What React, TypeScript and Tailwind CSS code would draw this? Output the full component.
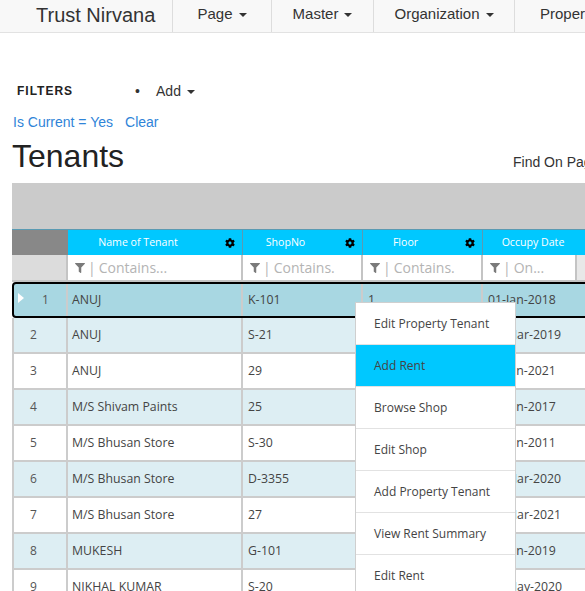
import { FaCog, FaFilter } from 'react-icons/fa';

const rows = [
  { no: 1, name: 'ANUJ', shop: 'K-101', floor: '1', date: '01-Jan-2018' },
  { no: 2, name: 'ANUJ', shop: 'S-21', floor: '1', date: '01-Mar-2019' },
  { no: 3, name: 'ANUJ', shop: '29', floor: '2', date: '01-Jan-2021' },
  { no: 4, name: 'M/S Shivam Paints', shop: '25', floor: 'G', date: '01-Jan-2017' },
  { no: 5, name: 'M/S Bhusan Store', shop: 'S-30', floor: '1', date: '01-Jan-2011' },
  { no: 6, name: 'M/S Bhusan Store', shop: 'D-3355', floor: '3', date: '01-Mar-2020' },
  { no: 7, name: 'M/S Bhusan Store', shop: '27', floor: '2', date: '01-Mar-2021' },
  { no: 8, name: 'MUKESH', shop: 'G-101', floor: 'G', date: '01-Jan-2019' },
  { no: 9, name: 'NIKHAL KUMAR', shop: 'S-20', floor: '1', date: '01-May-2020' },
];

const menu = [
  'Edit Property Tenant',
  'Add Rent',
  'Browse Shop',
  'Edit Shop',
  'Add Property Tenant',
  'View Rent Summary',
  'Edit Rent',
];

function Caret() {
  return (
    <span className="inline-block ml-[6px] w-0 h-0 border-t-[4px] border-l-[4px] border-r-[4px] border-t-[#333] border-l-transparent border-r-transparent align-middle" />
  );
}

function NavItem({ label, width }: { label: string; width: string }) {
  return (
    <div className={`${width} h-full flex items-center justify-center border-l border-[#ddd] text-[15px] text-[#333] shrink-0 pb-[3px]`}>
      {label}
      <Caret />
    </div>
  );
}

function HeadCell({ label, width, gear = true }: { label: string; width: string; gear?: boolean }) {
  return (
    <div className={`${width} shrink-0 h-full bg-[#00c8ff] border-r border-[#5a9ab2] flex items-center relative`}>
      <span className={`flex-1 text-center ${gear ? 'pr-[34px]' : 'pr-[0px]'} text-white text-[10.6px]`}>{label}</span>
      {gear && (
        <span className="absolute right-[7px] top-[8px] text-black">
          <FaCog size={10} />
        </span>
      )}
    </div>
  );
}

function FilterCell({ hint, width }: { hint: string; width: string }) {
  return (
    <div className={`${width} shrink-0 h-full bg-white border-r-2 border-[#c4c4c4] flex items-center pl-[7px] gap-[3px] text-[#b4b4b4] text-[14px] overflow-hidden whitespace-nowrap`}>
      <span className="text-[#7a7a7a] mt-[1px]">
        <FaFilter size={10} />
      </span>
      <span>|</span>
      <span>{hint}</span>
    </div>
  );
}

export default function App() {
  return (
    <div className="w-[585px] h-[591px] overflow-hidden bg-white relative font-['Liberation_Sans',Arial,sans-serif]">
      {/* navbar */}
      <div className="h-[33px] bg-[#f8f8f8] border-b border-[#e2e2e2] flex items-stretch whitespace-nowrap">
        <div className="w-[172px] shrink-0 pl-[36px] pb-[3px] flex items-center text-[20px] text-[#333]">Trust Nirvana</div>
        <NavItem label="Page" width="w-[99px]" />
        <NavItem label="Master" width="w-[102px]" />
        <NavItem label="Organization" width="w-[141px]" />
        <div className="w-[120px] h-full flex items-center border-l border-[#ddd] pl-[25px] pb-[3px] text-[15px] text-[#333] shrink-0">
          Property
        </div>
      </div>

      {/* filters */}
      <div className="mt-[48px] h-[20px] flex items-center whitespace-nowrap">
        <span className="ml-[17px] text-[12px] font-bold tracking-[1px] text-[#222]">FILTERS</span>
        <span className="ml-[62px] text-[14px] text-[#333]">•</span>
        <span className="ml-[16px] text-[14px] text-[#333]">
          Add
          <Caret />
        </span>
      </div>
      <div className="mt-[11px] h-[20px] flex items-center text-[14px] text-[#2f84d8] pl-[13px] gap-[12px]">
        <span>Is Current = Yes</span>
        <span>Clear</span>
      </div>
      <div className="mt-[6px] h-[36px] flex items-end whitespace-nowrap">
        <h1 className="w-[513px] shrink-0 pl-[12px] text-[32px] leading-[36px] text-[#222]">Tenants</h1>
        <span className="text-[14px] text-[#333] mb-[1px]">Find On Page</span>
      </div>

      {/* grid */}
      <div className="mt-[9px] ml-[12px] w-[640px] font-['Open_Sans','Noto_Sans',sans-serif]">
        <div className="h-[46px] bg-[#cbcbcb]" />
        <div className="h-[26px] flex border-t border-[#5a9ab2]">
          <div className="w-[56px] shrink-0 h-full bg-[#888]" />
          <HeadCell label="Name of Tenant" width="w-[175px]" />
          <HeadCell label="ShopNo" width="w-[120px]" />
          <HeadCell label="Floor" width="w-[120px]" />
          <div className="w-[94px] shrink-0 h-full bg-[#00c8ff] flex items-center justify-center text-white text-[10.6px] pl-[6px]">
            Occupy Date
          </div>
          <div className="flex-1 h-full bg-[#00c8ff]" />
        </div>
        <div className="h-[27px] flex border-b-2 border-[#c4c4c4]">
          <div className="w-[56px] shrink-0 h-full bg-[#dcdcdc] border-r-2 border-[#c4c4c4]" />
          <FilterCell hint="Contains..." width="w-[175px]" />
          <FilterCell hint="Contains." width="w-[120px]" />
          <FilterCell hint="Contains." width="w-[120px]" />
          <FilterCell hint="On..." width="w-[94px]" />
          <div className="flex-1 h-full bg-[#e8e8e8]" />
        </div>

        {rows.map((r) => {
          const selected = r.no === 1;
          const bg = selected ? 'bg-[#a8d7e2]' : r.no % 2 === 0 ? 'bg-[#ddeef3]' : 'bg-white';
          return (
            <div
              key={r.no}
              className={`h-[36px] flex text-[12.3px] text-[#444] whitespace-nowrap ${bg} ${
                selected ? 'border-2 border-black rounded-[4px]' : 'border-b-2 border-l-2 border-[#cccccc]'
              }`}
            >
              <div className="w-[54px] shrink-0 h-full border-r-2 border-[#cccccc] flex items-center text-[12px] text-[#555]">
                {selected ? (
                  <>
                    <span className="ml-[4px] w-0 h-0 border-l-[6px] border-l-white border-t-[5px] border-b-[5px] border-t-transparent border-b-transparent mb-[4px]" />
                    <span className="ml-[18px]">{r.no}</span>
                  </>
                ) : (
                  <span className="ml-[16px]">{r.no}</span>
                )}
              </div>
              <div className="w-[175px] shrink-0 h-full border-r-2 border-[#cccccc] flex items-center pl-[4px]">{r.name}</div>
              <div className="w-[120px] shrink-0 h-full border-r-2 border-[#cccccc] flex items-center pl-[5px]">{r.shop}</div>
              <div className="w-[120px] shrink-0 h-full border-r-2 border-[#cccccc] flex items-center pl-[5px]">{r.floor}</div>
              <div className="flex-1 h-full flex items-center pl-[5px]">{r.date}</div>
            </div>
          );
        })}
      </div>

      {/* context menu */}
      <div className="absolute left-[355px] top-[302px] w-[161px] bg-white border border-[#cfcfcf] font-['Open_Sans','Noto_Sans',sans-serif]">
        {menu.map((m, i) => (
          <div
            key={m}
            className={`h-[42px] flex items-center pl-[18px] text-[12px] text-[#444] whitespace-nowrap ${
              i === 1 ? 'bg-[#00c8ff]' : ''
            } ${i < menu.length - 1 ? 'border-b border-[#e2e2e2]' : ''}`}
          >
            {m}
          </div>
        ))}
      </div>
    </div>
  );
}
